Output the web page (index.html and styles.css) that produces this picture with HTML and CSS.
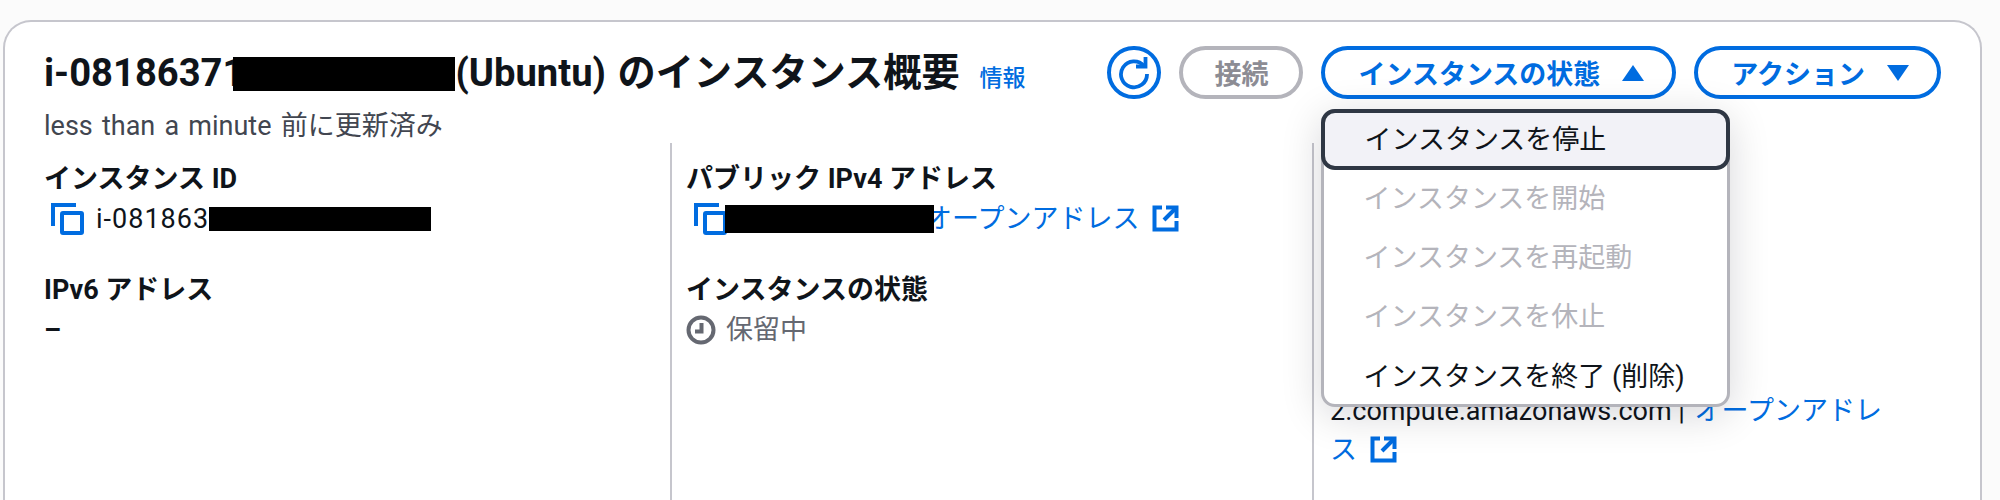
FILE: index.html
```html
<!DOCTYPE html>
<html lang="ja">
<head>
  <meta charset="UTF-8">
  <title>インスタンス概要</title>
  <link rel="stylesheet" href="styles.css">
</head>
<body>
  <div class="card">
    <div class="card-header">
      <div class="heading">
        <h1 class="title">i-08186371<span class="redact redact-title"></span>(Ubuntu) のインスタンス概要<a class="info">情報</a></h1>
        <div class="updated">less than a minute 前に更新済み</div>
      </div>
      <div class="actions">
        <button class="btn btn-icon">
          <svg width="34" height="34" viewBox="0 0 34 34" fill="none" stroke="#006ce0" stroke-width="3.8">
            <path d="M27 10A13 13 0 1 0 30 18"/>
            <path d="M28.5 1V10.5H19"/>
          </svg>
        </button>
        <button class="btn btn-disabled">接続</button>
        <div class="dropdown">
          <button class="btn btn-state">インスタンスの状態<span class="tri tri-up"></span></button>
          <div class="menu">
            <div class="menu-item menu-item-active">インスタンスを停止</div>
            <div class="menu-item menu-item-disabled">インスタンスを開始</div>
            <div class="menu-item menu-item-disabled">インスタンスを再起動</div>
            <div class="menu-item menu-item-disabled">インスタンスを休止</div>
            <div class="menu-item">インスタンスを終了 (削除)</div>
          </div>
        </div>
        <button class="btn btn-action">アクション<span class="tri tri-down"></span></button>
      </div>
    </div>

    <div class="columns">
      <div class="col">
        <div class="field">
          <div class="label">インスタンス ID</div>
          <div class="value">
            <svg class="copy-icon" width="33" height="32" viewBox="0 0 33 32" fill="none" stroke="#006ce0" stroke-width="4">
              <path d="M25 2H2V23"/>
              <rect x="11" y="10" width="20" height="20" rx="1"/>
            </svg>
            <span class="val-text">i-081863</span><span class="redact redact-id"></span>
          </div>
        </div>
        <div class="field">
          <div class="label">IPv6 アドレス</div>
          <div class="value dash">–</div>
        </div>
      </div>

      <div class="col">
        <div class="field">
          <div class="label">パブリック IPv4 アドレス</div>
          <div class="value">
            <svg class="copy-icon copy-icon-ip" width="33" height="32" viewBox="0 0 33 32" fill="none" stroke="#006ce0" stroke-width="4">
              <path d="M25 2H2V23"/>
              <rect x="11" y="10" width="20" height="20" rx="1"/>
            </svg>
            <span class="redact redact-ip"></span><a class="link">オープンアドレス<svg class="ext-icon" width="27" height="27" viewBox="0 0 27 27" fill="none" stroke="#006ce0" stroke-width="4"><path d="M10 2.5H2.5V24.5H24.5V16"/><path d="M14 2.5H24.5V13"/><path d="M24 3L12 15"/></svg></a>
          </div>
        </div>
        <div class="field">
          <div class="label">インスタンスの状態</div>
          <div class="value status">
            <svg class="clock-icon" width="30" height="30" viewBox="0 0 30 30" fill="none" stroke="#656871" stroke-width="4">
              <circle cx="15" cy="15" r="12.5"/>
              <path d="M15.5 8V16.5H9"/>
            </svg>
            <span>保留中</span>
          </div>
        </div>
      </div>

      <div class="col col-dns">
        <div class="dns">2.compute.amazonaws.com | <a class="link">オープンアドレス<svg class="ext-icon" width="27" height="27" viewBox="0 0 27 27" fill="none" stroke="#006ce0" stroke-width="4"><path d="M10 2.5H2.5V24.5H24.5V16"/><path d="M14 2.5H24.5V13"/><path d="M24 3L12 15"/></svg></a></div>
      </div>
    </div>
  </div>
</body>
</html>
```

FILE: styles.css
```css
html, body {
  margin: 0;
  height: 500px;
  overflow: hidden;
}
body {
  background: #fbfbfb;
  color: #0f141a;
  font-family: Roboto, "Noto Sans CJK JP", sans-serif;
  font-size: 27px;
  line-height: 40px;
}
.card {
  box-sizing: border-box;
  width: 1979px;
  height: 480px;
  margin: 20px 0 0 3px;
  background: #fff;
  border: 2px solid #c6c6cd;
  border-bottom: none;
  border-radius: 28px 28px 0 0;
}
.card-header {
  display: flex;
  justify-content: space-between;
  padding: 24px 39px 0 39px;
  height: 121px;
  box-sizing: border-box;
}
.title {
  margin: 5px 0 0;
  font-size: 38.2px;
  line-height: 44px;
  font-weight: 700;
  white-space: nowrap;
  word-spacing: 2px;
}
.info {
  margin-left: 20px;
  font-size: 23px;
  font-weight: 500;
  color: #006ce0;
}
.updated {
  margin-top: 9px;
  color: #424650;
  line-height: 32px;
  word-spacing: 2.5px;
}
.redact {
  display: inline-block;
  background: #000;
}
.redact-title {
  width: 222px;
  height: 34px;
  margin-left: -11px;
  vertical-align: -5px;
}
.redact-id {
  width: 222px;
  height: 24px;
  vertical-align: -4px;
}
.redact-ip {
  position: relative;
  z-index: 1;
  width: 209px;
  height: 28px;
  margin-right: -9px;
  vertical-align: -6px;
}
.val-text {
  letter-spacing: 1px;
}
.actions {
  display: flex;
  gap: 18px;
  height: 53px;
}
.btn {
  box-sizing: border-box;
  height: 53px;
  padding: 0 28px 0 33px;
  background: #fff;
  border: 4px solid #006ce0;
  border-radius: 27px;
  color: #006ce0;
  font: 700 27px Roboto, "Noto Sans CJK JP", sans-serif;
  display: flex;
  align-items: center;
  white-space: nowrap;
}
.btn-icon {
  width: 54px;
  padding: 0;
  justify-content: center;
}
.btn-disabled {
  border-color: #b4b4bb;
  color: #8c8c94;
  padding: 0 31px;
}
.tri {
  display: inline-block;
  width: 0;
  height: 0;
  margin-left: 22px;
  border-left: 11px solid transparent;
  border-right: 11px solid transparent;
}
.tri-up {
  border-bottom: 16px solid #006ce0;
}
.tri-down {
  border-top: 16px solid #006ce0;
}
.dropdown {
  position: relative;
}
.menu {
  position: absolute;
  z-index: 5;
  top: 63px;
  left: 0;
  width: 409px;
  box-sizing: border-box;
  background: #fff;
  border: 3px solid #b4b4bb;
  border-radius: 14px;
  box-shadow: 0 8px 40px rgba(0, 7, 22, 0.16);
}
.menu-item {
  height: 59px;
  padding-left: 39px;
  display: flex;
  align-items: center;
  color: #0f141a;
  white-space: nowrap;
}
.menu-item-active {
  margin: -3px -3px -1px;
  height: 61px;
  background: #f2f2f7;
  border: 4px solid #2f3744;
  border-radius: 14px;
  box-sizing: border-box;
}
.menu-item-disabled {
  color: #b4b4bb;
}
.menu-item:last-child {
  height: 58px;
  padding-top: 4px;
  box-sizing: border-box;
}
.columns {
  display: grid;
  grid-template-columns: 665px 642px 1fr;
  height: 357px;
}
.col {
  padding: 16px 39px 0 39px;
}
.col + .col {
  border-left: 2px solid #c6c6cd;
  padding-left: 14px;
}
.field {
  height: 111px;
}
.label {
  font-weight: 700;
}
.value {
  display: flex;
  align-items: center;
  height: 40px;
}
.dash {
  font-weight: 700;
}
.copy-icon {
  margin: 0 12px 0 7px;
  flex: none;
}
.copy-icon-ip {
  margin: 0 -2px 0 8px;
}
.link {
  color: #006ce0;
}
.ext-icon {
  margin-left: 13px;
  vertical-align: -4px;
}
.status {
  color: #656871;
}
.clock-icon {
  margin-right: 10px;
}
.col + .col-dns {
  padding: 249px 91px 0 16px;
  line-height: 39px;
}
.dns .link {
  margin-left: 3px;
}
```
